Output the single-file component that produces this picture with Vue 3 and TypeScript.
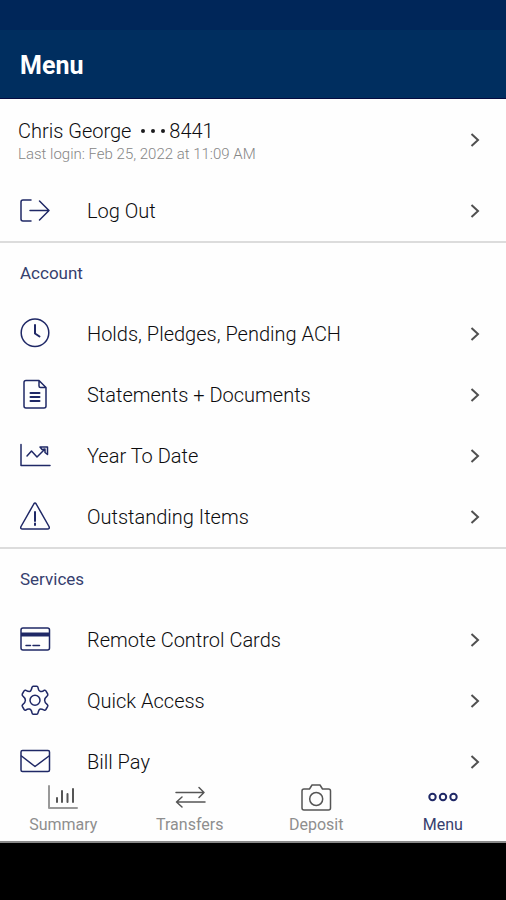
<script setup lang="ts">
import { ref } from 'vue'

interface MenuItem {
  icon: string
  label: string
}

interface MenuSection {
  title: string
  items: MenuItem[]
}

const sections: MenuSection[] = [
  {
    title: 'Account',
    items: [
      { icon: 'clock', label: 'Holds, Pledges, Pending ACH' },
      { icon: 'document', label: 'Statements + Documents' },
      { icon: 'trend', label: 'Year To Date' },
      { icon: 'warning', label: 'Outstanding Items' },
    ],
  },
  {
    title: 'Services',
    items: [
      { icon: 'card', label: 'Remote Control Cards' },
      { icon: 'gear', label: 'Quick Access' },
      { icon: 'mail', label: 'Bill Pay' },
    ],
  },
]

const tabs = ['Summary', 'Transfers', 'Deposit', 'Menu']
const activeTab = ref('Menu')
</script>

<template>
  <div class="screen">
    <div class="status-bar"></div>
    <header class="app-bar">
      <h1>Menu</h1>
    </header>

    <main class="content">
      <button type="button" class="row profile">
        <span class="who">
          <span class="name">Chris George <span class="mask"><i></i><i></i><i></i></span>8441</span>
          <span class="login">Last login: Feb 25, 2022 at 11:09 AM</span>
        </span>
        <svg class="chevron" viewBox="0 0 10 14" aria-hidden="true"><path d="M1.5 1 8 7 1.5 13" /></svg>
      </button>
      <button type="button" class="row">
        <svg class="icon" viewBox="0 0 32 32" aria-hidden="true">
          <path d="M12 5H4Q2 5 2 7V24Q2 26 4 26H12M11 15.5H30M20.5 6 30 15.5 20.5 25" />
        </svg>
        <span class="label">Log Out</span>
        <svg class="chevron" viewBox="0 0 10 14" aria-hidden="true"><path d="M1.5 1 8 7 1.5 13" /></svg>
      </button>

      <section v-for="section in sections" :key="section.title" class="group">
        <h2>{{ section.title }}</h2>
        <button v-for="item in section.items" :key="item.label" type="button" class="row">
          <svg class="icon" viewBox="0 0 32 32" aria-hidden="true">
            <template v-if="item.icon === 'clock'">
              <circle cx="16" cy="14.8" r="13.8" />
              <path d="M16 7V15.5L20.5 18.5" stroke-width="2" />
            </template>
            <template v-else-if="item.icon === 'document'">
              <path d="M20 1.5H7Q5 1.5 5 3.5V27Q5 29 7 29H25Q27 29 27 27V8.5ZM20 1.5V7Q20 8.5 21.5 8.5H27" />
              <path d="M11.5 14H20.5M11.5 18H20.5M11.5 22H20.5" stroke-width="2" />
            </template>
            <template v-else-if="item.icon === 'trend'">
              <path d="M2 4.5V25.5H31" />
              <path d="M8 16 12.5 11 18 17 26 9M21 7H28.5V14.5L26 12.5V9L23 9.500Z" />
            </template>
            <template v-else-if="item.icon === 'warning'">
              <path d="M14.8 3Q16 1 17.2 3L30 25.5Q31 28 28.5 28H3.5Q1 28 2 25.5Z" />
              <path d="M16 11V20M16 22.5V24" stroke-width="2" />
            </template>
            <template v-else-if="item.icon === 'card'">
              <rect x="2" y="4" width="28.5" height="22" rx="2" />
              <path d="M2 10.5H30.5" stroke-width="4" stroke-linecap="butt" />
              <path d="M7 21.5H11.5M14 21.5H20.5" />
            </template>
            <template v-else-if="item.icon === 'gear'">
              <path d="M14.3 1.2H17.7Q18.8 1.200 19 2.500Q19.500 6 21.500 6.500T25.200 5.300Q26.200 4.900 26.900 5.900L28.700 9Q29.200 10 28.300 10.800Q25.600 13 25.600 15.200T28.300 19.600Q29.200 20.400 28.700 21.400L26.900 24.500Q26.200 25.500 25.200 25.100Q23 24 21.500 24T19 27.900Q18.800 29.200 17.700 29.200H14.300Q13.200 29.200 13 27.900Q12.500 24.400 10.500 24T6.800 25.100Q5.800 25.500 5.100 24.500L3.300 21.400Q2.800 20.400 3.700 19.600Q6.400 17.400 6.400 15.200T3.700 10.800Q2.800 10 3.300 9L5.100 5.900Q5.800 4.900 6.800 5.300Q9 6.500 10.500 6.500T13 2.500Q13.200 1.200 14.300 1.200Z" />
              <circle cx="16" cy="15.2" r="5" />
            </template>
            <template v-else>
              <rect x="2" y="4.5" width="28.5" height="21" rx="1.5" />
              <path d="M2.5 10 16 20.5 30 10" />
            </template>
          </svg>
          <span class="label">{{ item.label }}</span>
          <svg class="chevron" viewBox="0 0 10 14" aria-hidden="true"><path d="M1.5 1 8 7 1.5 13" /></svg>
        </button>
      </section>
    </main>

    <nav class="tabs">
      <button
        v-for="tab in tabs"
        :key="tab"
        type="button"
        class="tab"
        :class="{ active: tab === activeTab }"
        @click="activeTab = tab"
      >
        <svg viewBox="0 0 32 28" aria-hidden="true">
          <g v-if="tab === 'Summary'">
            <path class="soft" d="M2 3V25H30" />
            <path class="bars" d="M10 15V19M15 8V19M20.5 11V19M26 6V19" />
          </g>
          <path v-else-if="tab === 'Transfers'" d="M2 9.5H30M25 4.5 30 9.5 25 14.5M31 19H2.5M8 14 2.5 19 8 24" />
          <g v-else-if="tab === 'Deposit'">
            <path d="M4 6H9.5L12 2H20L22.5 6H28.5Q30.5 6 30.5 8V25Q30.5 27 28.5 27H4Q2 27 2 25V8Q2 6 4 6Z" />
            <circle cx="16.2" cy="16" r="6.5" />
          </g>
          <g v-else class="dots">
            <circle cx="5.5" cy="14" r="3.2" />
            <circle cx="16" cy="14" r="3.2" />
            <circle cx="26.5" cy="14" r="3.2" />
          </g>
        </svg>
        <span>{{ tab }}</span>
      </button>
    </nav>
    <div class="system-bar"></div>
  </div>
</template>

<style>
body {
  margin: 0;
}
</style>

<style scoped>
.screen {
  display: flex;
  flex-direction: column;
  height: 100vh;
  background: #fefefe;
  font-family: Roboto, "Liberation Sans", sans-serif;
  color: #0c0c0e;
}

.status-bar {
  flex: none;
  height: 30px;
  background: #002659;
}

.app-bar {
  display: flex;
  flex: none;
  align-items: center;
  box-sizing: border-box;
  height: 69px;
  padding: 4px 20px 0;
  border-bottom: 1px solid #050b40;
  background: #002e5f;
}

h1 {
  margin: 0;
  color: #fff;
  font-size: 25px;
  font-weight: 700;
  line-height: 32px;
}

.content {
  flex: 1;
  min-height: 0;
  overflow: hidden;
}

button {
  border: 0;
  padding: 0;
  background: none;
  color: inherit;
  font: inherit;
  text-align: left;
  cursor: pointer;
}

.row {
  display: flex;
  align-items: center;
  width: 100%;
  height: 61px;
  padding: 0 26px 0 19px;
}

.profile {
  height: 81px;
  padding-left: 18px;
}

.who {
  display: flex;
  flex: 1;
  flex-direction: column;
  padding-top: 4px;
}

.name {
  font-size: 20px;
  font-weight: 300;
  line-height: 24px;
}

.mask {
  display: inline-flex;
  gap: 6px;
  margin: 0 4px 0 5px;
  vertical-align: 5px;
}

.mask i {
  width: 4px;
  height: 4px;
  border-radius: 50%;
  background: #1d1d1f;
}

.login {
  color: #868686;
  font-size: 15px;
  font-weight: 300;
  line-height: 22px;
}

.icon {
  flex: none;
  width: 32px;
  height: 32px;
  margin-right: 36px;
  fill: none;
  stroke: #1f2866;
  stroke-width: 1.5;
  stroke-linecap: round;
  stroke-linejoin: round;
}

.label {
  flex: 1;
  font-size: 20px;
  font-weight: 300;
  line-height: 24px;
}

.chevron {
  flex: none;
  width: 10px;
  height: 14px;
  fill: none;
  stroke: #505050;
  stroke-width: 2;
}

.group {
  border-top: 2px solid #dcdcdc;
}

h2 {
  margin: 0;
  padding: 0 20px;
  color: #36406e;
  font-size: 17px;
  font-weight: 400;
  line-height: 60px;
}

.tabs {
  display: flex;
  flex: none;
  height: 66px;
  border-bottom: 2px solid #8a8a8a;
  background: #fefefe;
}

.tab {
  display: flex;
  flex: 1;
  flex-direction: column;
  align-items: center;
  padding-top: 8px;
  color: #8e8e8e;
  font-size: 16px;
  line-height: 20px;
}

.tab svg {
  width: 32px;
  height: 28px;
  margin-bottom: 4px;
  fill: none;
  stroke: #555;
  stroke-width: 1.5;
  stroke-linecap: round;
  stroke-linejoin: round;
}

.tab .soft {
  stroke: #999;
  stroke-width: 2;
}

.tab .bars {
  stroke-width: 2;
}

.tab .dots {
  stroke: #1f2866;
  stroke-width: 2;
}

.tab.active {
  color: #36406e;
}

.system-bar {
  flex: none;
  height: 57px;
  background: #000;
}
</style>
